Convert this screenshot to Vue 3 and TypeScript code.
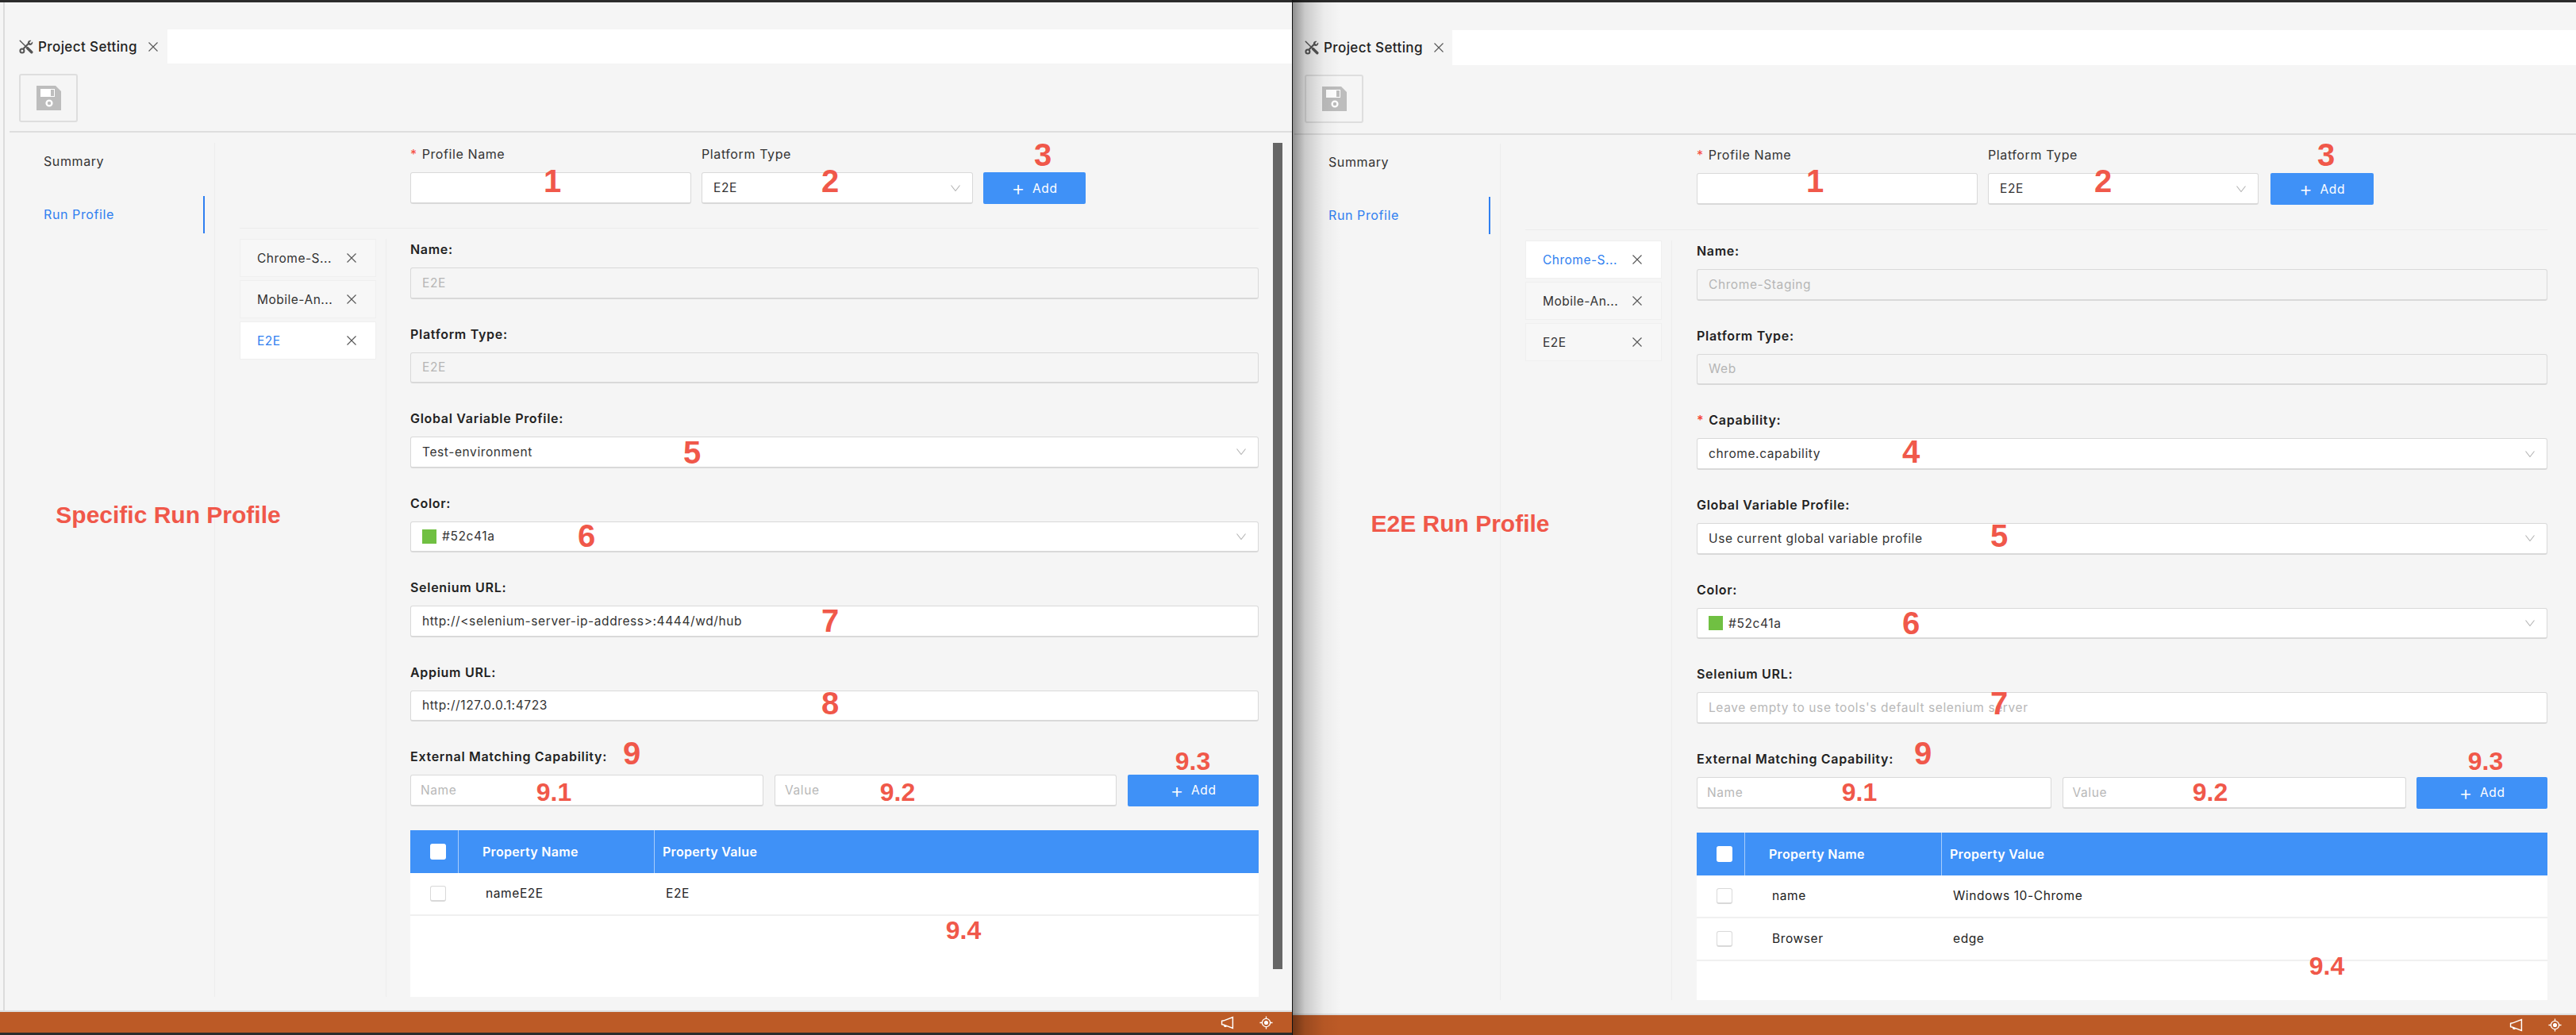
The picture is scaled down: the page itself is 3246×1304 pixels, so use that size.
<script setup lang="ts">
interface Field {
  label: string;
  kind: "disabled" | "select" | "input";
  value?: string;
  placeholder?: string;
  required?: boolean;
  swatch?: string;
}

interface Row {
  name: string;
  value: string;
}

interface RunWindow {
  key: string;
  activeTab: string;
  fields: Field[];
  rows: Row[];
}

interface Note {
  text: string;
  x: number;
  y: number;
  size: number;
}

const tabs = ["Chrome-S...", "Mobile-An...", "E2E"];

const windows: RunWindow[] = [
  {
    key: "specific",
    activeTab: "E2E",
    fields: [
      { label: "Name:", kind: "disabled", value: "E2E" },
      { label: "Platform Type:", kind: "disabled", value: "E2E" },
      { label: "Global Variable Profile:", kind: "select", value: "Test-environment" },
      { label: "Color:", kind: "select", value: "#52c41a", swatch: "#70c042" },
      { label: "Selenium URL:", kind: "input", value: "http://<selenium-server-ip-address>:4444/wd/hub" },
      { label: "Appium URL:", kind: "input", value: "http://127.0.0.1:4723" },
    ],
    rows: [{ name: "nameE2E", value: "E2E" }],
  },
  {
    key: "e2e",
    activeTab: "Chrome-S...",
    fields: [
      { label: "Name:", kind: "disabled", value: "Chrome-Staging" },
      { label: "Platform Type:", kind: "disabled", value: "Web" },
      { label: "Capability:", kind: "select", value: "chrome.capability", required: true },
      { label: "Global Variable Profile:", kind: "select", value: "Use current global variable profile" },
      { label: "Color:", kind: "select", value: "#52c41a", swatch: "#70c042" },
      { label: "Selenium URL:", kind: "input", placeholder: "Leave empty to use tools's default selenium server" },
    ],
    rows: [
      { name: "name", value: "Windows 10-Chrome" },
      { name: "Browser", value: "edge" },
    ],
  },
];

// red callouts drawn on top of the screenshot, x/y is the centre of the text
const notes: Note[] = [
  { text: "1", x: 696, y: 228, size: 40 },
  { text: "2", x: 1046, y: 228, size: 40 },
  { text: "3", x: 1314, y: 195, size: 40 },
  { text: "5", x: 872, y: 570, size: 40 },
  { text: "6", x: 739, y: 675, size: 40 },
  { text: "7", x: 1046, y: 782, size: 40 },
  { text: "8", x: 1046, y: 886, size: 40 },
  { text: "9", x: 796, y: 949, size: 40 },
  { text: "9.1", x: 698, y: 998, size: 32 },
  { text: "9.2", x: 1131, y: 998, size: 32 },
  { text: "9.3", x: 1503, y: 959, size: 32 },
  { text: "9.4", x: 1214, y: 1172, size: 32 },
  { text: "Specific Run Profile", x: 212, y: 649, size: 30 },
  { text: "1", x: 2287, y: 228, size: 40 },
  { text: "2", x: 2650, y: 228, size: 40 },
  { text: "3", x: 2931, y: 195, size: 40 },
  { text: "4", x: 2408, y: 569, size: 40 },
  { text: "5", x: 2519, y: 675, size: 40 },
  { text: "6", x: 2408, y: 785, size: 40 },
  { text: "7", x: 2519, y: 886, size: 40 },
  { text: "9", x: 2423, y: 949, size: 40 },
  { text: "9.1", x: 2343, y: 998, size: 32 },
  { text: "9.2", x: 2785, y: 998, size: 32 },
  { text: "9.3", x: 3132, y: 959, size: 32 },
  { text: "9.4", x: 2932, y: 1217, size: 32 },
  { text: "E2E Run Profile", x: 1840, y: 660, size: 30 },
];

function noteStyle(n: Note) {
  return { left: n.x + "px", top: n.y + "px", fontSize: n.size + "px" };
}
</script>

<template>
  <div class="page">
    <section v-for="win in windows" :key="win.key" class="window" :class="'window-' + win.key">
      <div class="top-line"></div>
      <div class="upper">
        <div class="edge"></div>
        <div class="content">
          <div class="tab-strip">
            <div class="tab">
              <svg class="tool-icon" viewBox="0 0 18 18" fill="none">
                <path d="M1.2 1.2 9 9" stroke="#555" stroke-width="1.4" stroke-linecap="round" />
                <path d="M10.5 10.5 15.8 15.8" stroke="#555" stroke-width="3.4" stroke-linecap="round" />
                <path d="M5.6 11.2 11.8 5" stroke="#555" stroke-width="2.2" />
                <path d="M17 2.6 14.6 5 13 3.4 15.4 1C13.2.2 10.8 1.6 10.9 4.2 11 6.6 14 7.8 16 6.2 17.2 5.2 17.6 3.8 17 2.6Z" fill="#555" />
                <circle cx="3.9" cy="14" r="2.5" stroke="#555" stroke-width="2" />
              </svg>
              <span class="tab-title">Project Setting</span>
              <svg class="close tab-close" viewBox="0 0 12 12"><path d="M.5.5 11.5 11.5M11.5.5.5 11.5" /></svg>
            </div>
            <div class="tab-fill"></div>
          </div>

          <div class="toolbar">
            <button class="save-btn">
              <svg viewBox="0 0 31 31" width="31" height="31">
                <path d="M0 0H24L31 7V31H0Z" fill="#bdbdbd" />
                <path d="M5 4H23V14H5Z" fill="#fff" />
                <path d="M18 5H22V13H18Z" fill="#bdbdbd" />
                <circle cx="16" cy="22" r="3.4" fill="none" stroke="#fff" stroke-width="2.4" />
              </svg>
            </button>
          </div>

          <div class="body">
            <aside class="sidebar">
              <div class="menu-item">Summary</div>
              <div class="menu-item active">Run Profile</div>
            </aside>

            <main class="main">
              <div class="add-row">
                <div class="add-field name-field">
                  <label><span class="star">*</span>Profile Name</label>
                  <div class="box"></div>
                </div>
                <div class="add-field type-field">
                  <label>Platform Type</label>
                  <div class="box">
                    <span>E2E</span>
                    <svg class="chevron" viewBox="0 0 12 8"><path d="M.5.5 6 7.5 11.5.5" /></svg>
                  </div>
                </div>
                <button class="add-btn top-add"><span class="plus">+</span>Add</button>
              </div>

              <div class="profile">
                <div class="profile-tabs">
                  <div
                    v-for="t in tabs"
                    :key="t"
                    class="profile-tab"
                    :class="{ selected: t === win.activeTab }"
                  >
                    <span>{{ t }}</span>
                    <svg class="close" viewBox="0 0 12 12"><path d="M.5.5 11.5 11.5M11.5.5.5 11.5" /></svg>
                  </div>
                </div>

                <div class="form">
                  <div v-for="f in win.fields" :key="f.label" class="field">
                    <div class="field-label"><span v-if="f.required" class="star">*</span>{{ f.label }}</div>
                    <div class="box" :class="{ disabled: f.kind === 'disabled' }">
                      <i v-if="f.swatch" class="swatch" :style="{ background: f.swatch }"></i>
                      <span v-if="f.value">{{ f.value }}</span>
                      <span v-else class="placeholder">{{ f.placeholder }}</span>
                      <svg v-if="f.kind === 'select'" class="chevron" viewBox="0 0 12 8"><path d="M.5.5 6 7.5 11.5.5" /></svg>
                    </div>
                  </div>

                  <div class="field-label">External Matching Capability:</div>
                  <div class="cap-row">
                    <div class="box cap-name"><span class="placeholder">Name</span></div>
                    <div class="box cap-value"><span class="placeholder">Value</span></div>
                    <button class="add-btn cap-add"><span class="plus">+</span>Add</button>
                  </div>

                  <div class="table">
                    <div class="table-row head">
                      <div class="cell check"><i class="checkbox"></i></div>
                      <div class="cell">Property Name</div>
                      <div class="cell">Property Value</div>
                    </div>
                    <div v-for="r in win.rows" :key="r.name" class="table-row">
                      <div class="cell check"><i class="checkbox"></i></div>
                      <div class="cell">{{ r.name }}</div>
                      <div class="cell">{{ r.value }}</div>
                    </div>
                  </div>
                </div>
              </div>
            </main>

            <div v-if="win.key === 'specific'" class="scrollbar"></div>
          </div>
        </div>
      </div>

      <footer class="status">
        <svg class="status-icon" viewBox="0 0 16 16" fill="none">
          <path d="M14.5 1.5V14.5L4 10.5 1.5 10V6L4 5.5ZM4 10.5 5 12.5 7 12.5" />
        </svg>
        <svg class="status-icon" viewBox="0 0 18 18" fill="none">
          <circle cx="9" cy="9" r="5.4" />
          <circle cx="9" cy="9" r="2" fill="#fff" stroke="none" />
          <path d="M9 .5V3.5M9 14.5V17.5M.5 9H3.5M14.5 9H17.5" />
        </svg>
      </footer>

      <div v-if="win.key === 'e2e'" class="drop-shadow"></div>
    </section>

    <span v-for="n in notes" :key="n.text + n.x" class="note" :style="noteStyle(n)">{{ n.text }}</span>
  </div>
</template>

<style scoped>
.page {
  position: relative;
  display: flex;
  width: 3246px;
  height: 1304px;
  overflow: hidden;
  font-family: Inter, "Noto Sans", sans-serif;
  font-size: 15.5px;
  letter-spacing: 0.6px;
  color: #222;
  background: #f5f5f5;
}

.window {
  position: relative;
  display: flex;
  flex-direction: column;
  height: 100%;
  --field-gap: 31px;
}

.window-specific {
  width: 1628px;
  border-right: 1px solid #111;
  box-sizing: content-box;
}

.window-e2e {
  flex: 1;
  min-width: 0;
  --field-gap: 31.2px;
}

.top-line {
  height: 3px;
  flex: none;
  background: #2c2c2c;
}

.upper {
  flex: 1;
  display: flex;
  min-height: 0;
}

.edge {
  flex: none;
  box-sizing: border-box;
  width: 12px;
  position: relative;
}

.window-specific .edge::before {
  content: "";
  position: absolute;
  left: 0;
  top: 0;
  bottom: 0;
  width: 6px;
  border-right: 2px solid #dcdcdc;
  box-sizing: border-box;
}

.window-e2e .edge {
  width: 2px;
}

.content {
  flex: 1;
  min-width: 0;
  display: flex;
  flex-direction: column;
}

.tab-strip {
  display: flex;
  margin-top: 34px;
  height: 43px;
  flex: none;
}

.window-e2e .tab-strip {
  margin-top: 35px;
  height: 44px;
}

.tab {
  display: flex;
  align-items: center;
  padding-left: 12px;
  width: 199px;
  box-sizing: border-box;
  flex: none;
}

.window-e2e .tab {
  padding-left: 13px;
}

.tab-title {
  margin-left: 6px;
  font-size: 17px;
  font-weight: 500;
  letter-spacing: 0.4px;
  color: #222;
}

.tool-icon {
  width: 18px;
  height: 18px;
  flex: none;
}

.tab-close {
  margin-left: 14px;
}

.tab-fill {
  flex: 1;
  background: #fff;
}

.close {
  width: 12px;
  height: 12px;
  flex: none;
}

.close path {
  fill: none;
  stroke: #555;
  stroke-width: 1.1;
}

.toolbar {
  flex: none;
  height: 87px;
  box-sizing: border-box;
  padding: 13px 0 0 12px;
  border-bottom: 2px solid #dedede;
}

.window-e2e .toolbar {
  padding: 12px 0 0 13px;
  height: 88px;
}

.save-btn {
  display: flex;
  align-items: center;
  justify-content: center;
  width: 74px;
  height: 61px;
  padding: 0;
  box-sizing: border-box;
  background: #f5f5f5;
  border: 2px solid #dedede;
  border-radius: 3px;
}

.body {
  flex: 1;
  min-height: 0;
  display: flex;
  padding: 13px 0 17px;
}

.window-e2e .body {
  padding-top: 11px;
}

.sidebar {
  flex: none;
  width: 260px;
  box-sizing: border-box;
  padding-right: 12px;
  display: flex;
  flex-direction: column;
  gap: 20px;
  border-right: 1px solid #ededed;
}

.window-specific .sidebar {
  width: 259px;
}

.menu-item {
  height: 47px;
  line-height: 47px;
  padding-left: 43px;
  font-size: 16px;
  color: #333;
}

.menu-item.active {
  color: #2f7ff0;
  border-right: 2px solid #2f7ff0;
}

.main {
  flex: 1;
  min-width: 0;
  display: flex;
  flex-direction: column;
  padding-left: 31px;
}

.add-row {
  flex: none;
  display: flex;
  align-items: flex-end;
  gap: 13px;
  padding: 0 0 30px 215px;
  border-bottom: 1px solid #ececec;
}

.window-e2e .add-row {
  padding: 0 0 31px 216px;
}

.add-field label {
  display: block;
  height: 28px;
  line-height: 28px;
  margin-bottom: 9px;
  color: #333;
  font-size: 16px;
}

.name-field {
  width: 354px;
}

.type-field {
  width: 342px;
}

.window-e2e .type-field {
  width: 341px;
}

.star {
  color: #f5483b;
  margin-right: 6px;
}

.box {
  position: relative;
  display: flex;
  align-items: center;
  height: 39.5px;
  box-sizing: border-box;
  padding: 0 14px;
  background: #fff;
  border: 1px solid #d9d9d9;
  border-bottom-width: 2px;
  border-radius: 3px;
  color: #333;
}

.add-field .box {
  height: 40px;
}

.box.disabled {
  background: #f5f5f5;
  color: #b5b5b5;
}

.placeholder {
  color: #b8b8b8;
}

.chevron {
  position: absolute;
  right: 15px;
  top: 50%;
  width: 12px;
  height: 8px;
  margin-top: -4px;
}

.chevron path {
  fill: none;
  stroke: #b5b5b5;
  stroke-width: 1.1;
}

.add-btn {
  display: flex;
  align-items: center;
  justify-content: center;
  height: 40px;
  padding: 0;
  border: none;
  border-radius: 2px;
  background: #3f91f7;
  color: #fff;
  font-family: inherit;
  font-size: 15.5px;
  letter-spacing: 0.6px;
}

.top-add {
  width: 129px;
}

.window-e2e .top-add {
  width: 130px;
  margin-left: 2px;
}

.plus {
  font-size: 26px;
  font-weight: 300;
  line-height: 1;
  margin-right: 9px;
}

.profile {
  flex: 1;
  min-height: 0;
  display: flex;
  padding-top: 13px;
}

.profile-tabs {
  flex: none;
  width: 185px;
  box-sizing: border-box;
  padding-right: 12px;
  display: flex;
  flex-direction: column;
  gap: 4px;
  border-right: 1px solid #ededed;
}

.profile-tab {
  display: flex;
  align-items: center;
  justify-content: space-between;
  height: 48px;
  box-sizing: border-box;
  padding: 0 24px 0 21px;
  letter-spacing: 0.5px;
  background: #f7f7f7;
  border: 1px solid #efefef;
  color: #333;
}

.profile-tab.selected {
  background: #fff;
  color: #2f7ff0;
}

.form {
  flex: 1;
  min-width: 0;
  display: flex;
  flex-direction: column;
  margin-left: 30px;
}

.window-e2e .form {
  margin-left: 31px;
}

.field {
  margin-bottom: var(--field-gap);
}

.field-label {
  height: 26px;
  line-height: 26px;
  margin-bottom: 10px;
  font-weight: 600;
  font-size: 16px;
  letter-spacing: 0.7px;
  color: #222;
}

.swatch {
  width: 18px;
  height: 18px;
  margin-right: 7px;
  flex: none;
}

.cap-row {
  display: flex;
  gap: 14px;
  flex: none;
}

.window-e2e .cap-row {
  gap: 13.5px;
}

.cap-name {
  width: 445px;
  padding: 0 12px;
}

.window-e2e .cap-name {
  width: 447px;
}

.cap-value {
  flex: 1;
  padding: 0 12px;
}

.cap-add {
  width: 165px;
  height: 39.5px;
}

.table {
  flex: 1;
  margin-top: 30px;
  background: #fff;
}

.table-row {
  display: grid;
  grid-template-columns: 61px 247px 1fr;
  height: 54px;
  align-items: center;
  box-sizing: border-box;
  border-bottom: 2px solid #f0f0f0;
}

.window-e2e .table-row {
  grid-template-columns: 61px 248px 1fr;
}

.table-row .cell {
  padding-left: 34px;
  height: 100%;
  display: flex;
  align-items: center;
  box-sizing: border-box;
}

.table-row .cell + .cell + .cell {
  padding-left: 14px;
}

.table-row .cell.check {
  padding-left: 25px;
}

.head {
  background: #3f91f7;
  color: #fff;
  font-weight: 600;
  font-size: 16px;
  letter-spacing: 0.3px;
  border-bottom: none;
}

.head .cell {
  padding-left: 30px;
  border-right: 1px solid rgba(255, 255, 255, 0.55);
}

.head .cell + .cell + .cell {
  padding-left: 10px;
  border-right: none;
}

.checkbox {
  display: block;
  width: 20px;
  height: 20px;
  box-sizing: border-box;
  background: #fff;
  border: 1px solid #d9d9d9;
  border-bottom-width: 2px;
  border-radius: 3px;
}

.head .checkbox {
  border-color: #fff;
}

.scrollbar {
  flex: none;
  width: 12px;
  margin: 0 12px 35px 18px;
  background: #666;
}

.window-e2e .main {
  padding-right: 36px;
}

.status {
  flex: none;
  display: flex;
  justify-content: flex-end;
  align-items: center;
  gap: 32px;
  height: 31px;
  box-sizing: border-box;
  padding: 0 24px 0 0;
  background: #bc5a26;
  border-top: 2px solid #dedede;
  border-bottom: 3px solid #2c2c2c;
}

.window-e2e .status {
  height: 27px;
  padding: 0 18px 0 0;
  border-bottom: none;
}

.status-icon {
  width: 17px;
  height: 17px;
}

.status-icon path,
.status-icon circle {
  stroke: #fff;
  stroke-width: 1.4;
}

.drop-shadow {
  position: absolute;
  left: 0;
  top: 0;
  bottom: 0;
  width: 60px;
  background: linear-gradient(90deg, rgba(0, 0, 0, 0.42), rgba(0, 0, 0, 0.18) 25%, rgba(0, 0, 0, 0.04) 65%, rgba(0, 0, 0, 0));
  pointer-events: none;
}

.note {
  position: absolute;
  transform: translate(-50%, -50%);
  font-family: "Liberation Sans", Arial, sans-serif;
  font-weight: 700;
  letter-spacing: 0;
  color: #f0584a;
  line-height: 1;
  white-space: nowrap;
}
</style>
